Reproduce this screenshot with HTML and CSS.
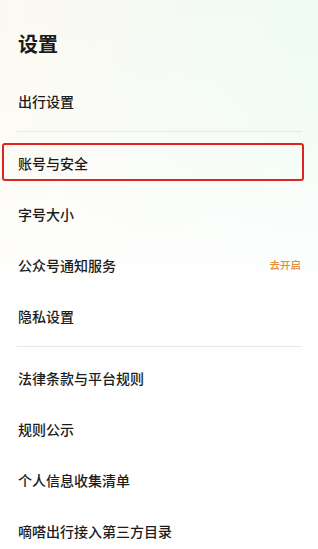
FILE: index.html
```html
<!DOCTYPE html>
<html lang="zh">
<head>
<meta charset="utf-8">
<title>设置</title>
<link rel="stylesheet" href="styles.css">
</head>
<body>
<div class="page">
  <h1 class="title">设置</h1>
  <div class="group">
    <div class="row"><span class="label">出行设置</span></div>
  </div>
  <div class="divider"></div>
  <div class="group">
    <div class="row highlighted"><span class="label">账号与安全</span><span class="mark"></span></div>
    <div class="row"><span class="label">字号大小</span></div>
    <div class="row"><span class="label">公众号通知服务</span><span class="action">去开启</span></div>
    <div class="row"><span class="label">隐私设置</span></div>
  </div>
  <div class="divider"></div>
  <div class="group">
    <div class="row"><span class="label">法律条款与平台规则</span></div>
    <div class="row"><span class="label">规则公示</span></div>
    <div class="row"><span class="label">个人信息收集清单</span></div>
    <div class="row"><span class="label">嘀嗒出行接入第三方目录</span></div>
  </div>
</div>
</body>
</html>
```
FILE: styles.css
```css
html, body {
  margin: 0;
  padding: 0;
}
body {
  width: 318px;
  height: 549px;
  overflow: hidden;
  font-family: "Noto Sans CJK SC", "Noto Sans", sans-serif;
  color: #1c1c1c;
  background:
    linear-gradient(to bottom, rgba(255,255,255,0) 0px, rgba(255,255,255,0.4) 160px, #ffffff 300px),
    linear-gradient(to right, #fcf9f1 0%, #f6faf3 45%, #eefbf3 100%);
}
.page {
  padding: 30px 16px 0 18px;
}
.title {
  margin: 0 0 17px 0;
  font-size: 20px;
  line-height: 28px;
  font-weight: 700;
  color: #1a1a1a;
}
.row {
  position: relative;
  height: 51px;
  display: flex;
  align-items: center;
  justify-content: space-between;
}
.label {
  font-size: 14px;
  font-weight: 500;
  color: #1c1c1c;
}
.action {
  font-size: 10.5px;
  font-weight: 500;
  color: #e58c3c;
  margin-right: 1px;
}
.divider {
  height: 1px;
  background: #e6e8e6;
  margin: 5px 0 5px -1px;
}
.mark {
  position: absolute;
  left: -16px;
  right: -2px;
  top: 6px;
  height: 38px;
  box-sizing: border-box;
  border: 2.5px solid #e0231e;
  border-radius: 3px;
}
```
